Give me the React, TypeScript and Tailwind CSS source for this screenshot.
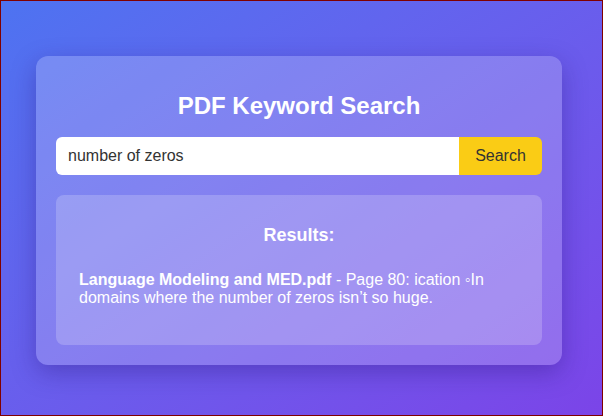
export default function App() {
  return (
    <div
      className="w-[603px] h-[416px] box-border border border-[#800000] bg-gradient-to-br from-[#4d73f1] to-[#7b44e8] pt-[55px] pl-[35px]"
      style={{ fontFamily: '"Liberation Sans", Arial, sans-serif' }}
    >
      <div className="w-[526px] h-[309px] box-border rounded-xl bg-white/20 shadow-[0_8px_24px_rgba(40,20,120,0.35)] p-5">
        <h1 className="text-[24px] leading-[28px] font-bold text-white text-center mt-4 mb-0">
          PDF Keyword Search
        </h1>
        <div className="flex mt-[17px] h-[38px]">
          <div className="flex-1 bg-white rounded-l-md flex items-center pl-3 text-[16px] text-[#333]">
            number of zeros
          </div>
          <button className="w-[83px] bg-[#facc15] rounded-r-md text-[16px] text-[#333] flex items-center justify-center">
            Search
          </button>
        </div>
        <div className="mt-5 h-[150px] box-border rounded-lg bg-white/20 pt-[29px] px-[23px]">
          <h3 className="text-[18px] leading-[22px] font-bold text-white text-center">
            Results:
          </h3>
          <p className="mt-[25px] text-[16px] leading-[18px] text-white">
            <span className="font-bold">Language Modeling and MED.pdf</span> - Page 80: ication ◦In domains where the number of zeros isn’t so huge.
          </p>
        </div>
      </div>
    </div>
  );
}
